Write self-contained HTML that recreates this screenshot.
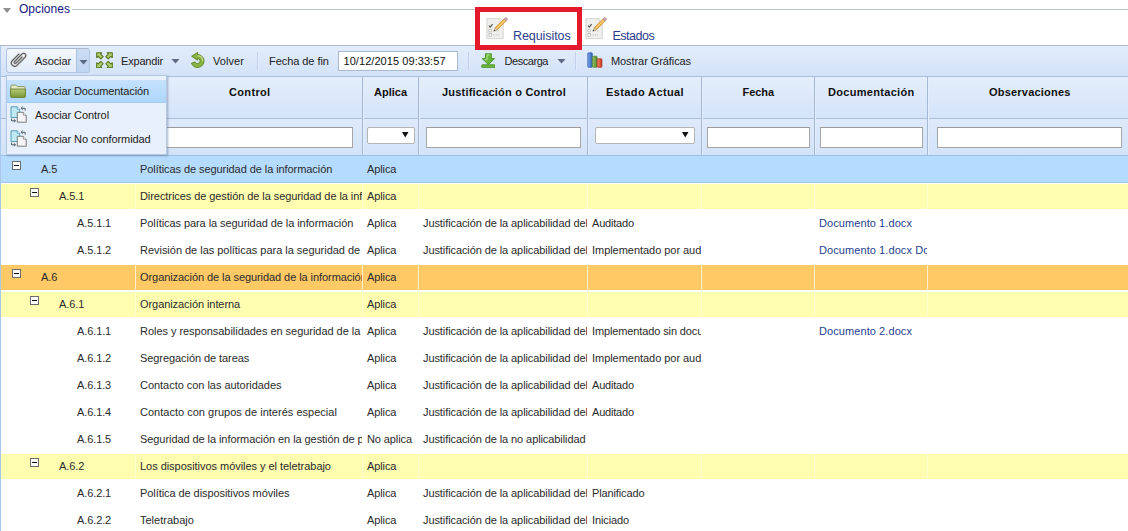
<!DOCTYPE html><html><head><meta charset="utf-8"><title>Requisitos</title><style>
*{box-sizing:border-box;margin:0;padding:0}
html,body{width:1128px;height:531px;overflow:hidden;background:#fff}
body{font-family:"Liberation Sans",sans-serif;font-size:11px;color:#222;position:relative}
.a{position:absolute;white-space:pre}
.t{position:absolute;white-space:pre;line-height:14px;height:14px}
.tb{color:#222;font-size:11px}
.hd{font-weight:bold;font-size:11px;color:#111}
.row{position:absolute;left:0;width:1128px;height:27px}
.c{position:absolute;top:1px;height:25px;overflow:hidden;white-space:pre;line-height:14px;padding:5px 0 0 4px;font-size:11px;color:#2b2b2b;letter-spacing:-0.11px}
.blue .c{background:transparent}
.yellow .c{background:#fffeb0}
.orange .c{background:#ffc966}
.c.lnk{color:#1f3f8f;letter-spacing:0.08px}
.inp{position:absolute;background:#fff;border:1px solid #a6a6a6;border-top-color:#9a9a9a}
.sel{position:absolute;background:#fff;border:1px solid #b4b4b4;border-radius:2px}
.sep{position:absolute;top:52px;width:2px;height:18px;border-left:1px solid #c3d2ea;border-right:1px solid #e2ebf9}
.ex{position:absolute;width:9px;height:9px;border:1px solid #6b6b6b;background:#fff}
.ex:after{content:"";position:absolute;left:1px;top:3px;width:5px;height:1px;background:#111}
</style></head><body>
<svg class="a" style="left:3px;top:7px" width="8" height="6" viewBox="0 0 8 6"><path d="M0 1h8L4 6z" fill="#8f8f8f"/></svg>
<div class="t" style="left:19px;top:2px;font-size:12px;color:#15157f;letter-spacing:0.04px">Opciones</div>
<div class="a" style="left:72px;top:9px;width:1056px;height:1px;background:#bfc2cf"></div>
<svg class="a" style="left:486px;top:17px" width="23" height="23" viewBox="0 0 23 23">
<path d="M.9 1.600h13.400l2.900 2.900v17.200H.9z" fill="#efefed" stroke="#d0d3cd" stroke-width=".9"/>
<path d="M14.300 1.600v2.900h2.900" fill="#fafafa" stroke="#d0d3cd" stroke-width=".7"/>
<path d="M3 8.600l1.300 1.500 2.300-3" fill="none" stroke="#5a5a5a" stroke-width="1.200"/>
<rect x="3" y="12.300" width="2.600" height="2.600" fill="#fff" stroke="#a9aca6" stroke-width=".6"/>
<rect x="3" y="16.600" width="2.600" height="2.600" fill="#fff" stroke="#a9aca6" stroke-width=".6"/>
<path d="M7.500 13.800h6M7.500 18h6" stroke="#c2c5bf" stroke-width="1" stroke-dasharray="1.200 1"/>
<path d="M9.040 10.840L17.940 1.940 20.060 4.060 11.160 12.960z" fill="#f2b54e" stroke="#c08a30" stroke-width=".7"/>
<path d="M10.100 11.900L19 3" stroke="#f9d590" stroke-width=".9"/>
<path d="M17.940 1.940L19.740.14 21.860 2.260 20.060 4.060z" fill="#d3a3ad" stroke="#a4888e" stroke-width=".6"/>
<path d="M7.800 14.200L9.040 10.840 11.160 12.960z" fill="#e9d3ae" stroke="#9a8a6a" stroke-width=".5"/>
<path d="M7.800 14.200L8.400 12.600 9.400 13.600z" fill="#333"/>
</svg>
<div class="t" style="left:513px;top:29px;font-size:12.5px;color:#2a3d8c;letter-spacing:-0.08px">Requisitos</div>
<svg class="a" style="left:585px;top:17px" width="23" height="23" viewBox="0 0 23 23">
<path d="M.9 1.600h13.400l2.900 2.900v17.200H.9z" fill="#efefed" stroke="#d0d3cd" stroke-width=".9"/>
<path d="M14.300 1.600v2.900h2.900" fill="#fafafa" stroke="#d0d3cd" stroke-width=".7"/>
<path d="M3 8.600l1.300 1.500 2.300-3" fill="none" stroke="#5a5a5a" stroke-width="1.200"/>
<rect x="3" y="12.300" width="2.600" height="2.600" fill="#fff" stroke="#a9aca6" stroke-width=".6"/>
<rect x="3" y="16.600" width="2.600" height="2.600" fill="#fff" stroke="#a9aca6" stroke-width=".6"/>
<path d="M7.500 13.800h6M7.500 18h6" stroke="#c2c5bf" stroke-width="1" stroke-dasharray="1.200 1"/>
<path d="M9.040 10.840L17.940 1.940 20.060 4.060 11.160 12.960z" fill="#f2b54e" stroke="#c08a30" stroke-width=".7"/>
<path d="M10.100 11.900L19 3" stroke="#f9d590" stroke-width=".9"/>
<path d="M17.940 1.940L19.740.14 21.860 2.260 20.060 4.060z" fill="#d3a3ad" stroke="#a4888e" stroke-width=".6"/>
<path d="M7.800 14.200L9.040 10.840 11.160 12.960z" fill="#e9d3ae" stroke="#9a8a6a" stroke-width=".5"/>
<path d="M7.800 14.200L8.400 12.600 9.400 13.600z" fill="#333"/>
</svg>
<div class="t" style="left:612.5px;top:29px;font-size:12.5px;color:#2a3d8c;letter-spacing:-0.5px">Estados</div>
<div class="a" style="left:0;top:45px;width:1128px;height:32px;background:linear-gradient(#e2edfb,#d3e2f7);border-top:1px solid #adbacd;border-bottom:1px solid #a9bfd9"></div>
<div class="a" style="left:6px;top:48px;width:84px;height:25px;border:1px solid #b3c5de;border-top-color:#a9b9d0;border-radius:3px;background:linear-gradient(#f3f7fd,#e1ebf9)"></div>
<div class="a" style="left:76px;top:49px;width:13px;height:23px;background:linear-gradient(#cbdcf4,#c0d5f1);border-left:1px solid #aec3e0;border-radius:0 2px 2px 0"></div>
<svg class="a" style="left:79px;top:59.500px" width="9" height="5" viewBox="0 0 9 5"><path d="M0.5 0h8L4.5 4.6z" fill="#5c6a84"/></svg>
<svg class="a" style="left:10.300px;top:51.300px" width="17.600" height="17.600" viewBox="0 0 16 16"><path d="M11 5.5L5.500 11a1 1 0 0 1-1.410-1.410L11 2.680a2 2 0 0 1 2.830 2.830L6.330 13.010a3 3 0 0 1-4.240-4.240L8.090 2.770" fill="none" stroke="#d6d6d6" stroke-width="2.100" stroke-linecap="round"/><path d="M11 5.500L5.500 11a1 1 0 0 1-1.410-1.410L11 2.680a2 2 0 0 1 2.830 2.830L6.330 13.010a3 3 0 0 1-4.240-4.240L8.090 2.770" fill="none" stroke="#5a5a5a" stroke-width="1" stroke-linecap="round"/></svg>
<div class="t tb" style="left:35px;top:54px;letter-spacing:-0.1px">Asociar</div>
<svg class="a" style="left:96.300px;top:51.700px" width="17" height="16.400" viewBox="0 0 17 17" preserveAspectRatio="none">
<g fill="#b1cf68" stroke="#50721a" stroke-width="1.050" stroke-linejoin="round">
<path d="M.7.700h5.100L4.600 2.200 7.200 4.800 4.800 7.200 2.200 4.600.7 5.800z"/>
<path d="M16.300.7v5.100L14.800 4.600 12.200 7.200 9.800 4.800 12.400 2.200 11.200.7z"/>
<path d="M.7 16.300v-5.100l1.500 1.200L4.800 9.800l2.400 2.400L4.600 14.800l1.200 1.500z"/>
<path d="M16.300 16.300h-5.100l1.200-1.500L9.800 12.200l2.400-2.400 2.600 2.600 1.500-1.200z"/>
</g></svg>
<div class="t tb" style="left:121px;top:54px;letter-spacing:-0.18px">Expandir</div>
<svg class="a" style="left:171px;top:59px" width="9" height="5" viewBox="0 0 9 5"><path d="M0.5 0h8L4.5 4.6z" fill="#5c6a84"/></svg>
<svg class="a" style="left:188.500px;top:51.500px" width="17" height="17" viewBox="0 0 17 17">
<path d="M8.500 2.500A6.500 6.500 0 1 1 2.390 11.220L6.060 9.890A2.600 2.600 0 1 0 8.500 6.400L8.500 8.200 2.600 4.300 8.500.5z" fill="#8ab441" stroke="#5b8222" stroke-width=".9" stroke-linejoin="round"/>
<path d="M9 3.700a5.200 5.200 0 0 1 4.700 5" fill="none" stroke="#c6dd92" stroke-width="1.100" stroke-linecap="round"/>
</svg>
<div class="t tb" style="left:213px;top:54px;letter-spacing:0.07px">Volver</div>
<div class="sep" style="left:257px"></div>
<div class="t tb" style="left:269px;top:54px;letter-spacing:-0.06px">Fecha de fin</div>
<div class="inp" style="left:338px;top:51px;width:120px;height:20px;border-color:#a7b9d3"></div>
<div class="t tb" style="left:343.5px;top:54px;letter-spacing:0.06px;color:#111">10/12/2015 09:33:57</div>
<div class="sep" style="left:468px"></div>
<svg class="a" style="left:480.700px;top:52.600px" width="14.800" height="15.400" viewBox="0 0 16 16" preserveAspectRatio="none">
<path d="M4.800.8h6.400v5h3.600L8 12 1.200 5.800h3.600z" fill="#68b63a" stroke="#3f8c1f" stroke-width=".9" stroke-linejoin="round"/>
<path d="M6.500 2h3M6.500 2v5H4.200" fill="none" stroke="#b9e695" stroke-width="1"/>
<rect x=".7" y="12.200" width="14.600" height="3" rx=".9" fill="#68b63a" stroke="#3f8c1f" stroke-width=".8"/>
</svg>
<div class="t tb" style="left:504.5px;top:54px;letter-spacing:-0.45px">Descarga</div>
<svg class="a" style="left:557px;top:59px" width="9" height="5" viewBox="0 0 9 5"><path d="M0.5 0h8L4.5 4.6z" fill="#5c6a84"/></svg>
<div class="sep" style="left:575px"></div>
<svg class="a" style="left:586.600px;top:51.600px" width="16.300" height="16.300" viewBox="0 0 17 17">
<defs><linearGradient id="gb" x1="0" x2="1"><stop offset="0" stop-color="#7aa7e8"/><stop offset="1" stop-color="#2f62b8"/></linearGradient>
<linearGradient id="gg" x1="0" x2="1"><stop offset="0" stop-color="#9cc46a"/><stop offset="1" stop-color="#54882a"/></linearGradient>
<linearGradient id="gr" x1="0" x2="1"><stop offset="0" stop-color="#f08a6c"/><stop offset="1" stop-color="#c8321c"/></linearGradient></defs>
<rect x=".8" y=".8" width="4.800" height="15.200" rx="1" fill="url(#gb)" stroke="#2c559c" stroke-width=".7"/>
<rect x="5.600" y="4.400" width="5" height="11.600" rx="1" fill="url(#gg)" stroke="#447c22" stroke-width=".7"/>
<rect x="10.600" y="7" width="5" height="9" rx="1" fill="url(#gr)" stroke="#a43220" stroke-width=".7"/>
</svg>
<div class="t tb" style="left:611px;top:54px;letter-spacing:-0.08px">Mostrar Gráficas</div>
<div class="a" style="left:475px;top:7px;width:107px;height:43px;border:5px solid #e3192c"></div>
<div class="a" style="left:0;top:77px;width:1128px;height:41px;background:linear-gradient(#e4eefc,#d4e4f9)"></div>
<div class="a" style="left:0;top:118px;width:1128px;height:37px;background:linear-gradient(#deeafb,#d3e3f9);border-top:1px solid #aebfd8"></div>
<div class="a" style="left:0;top:155px;width:1128px;height:1px;background:#9fc0e4"></div>
<div class="a" style="left:135px;top:77px;width:2px;height:78px;border-left:1px solid #a6b9d4;border-right:1px solid #e4edfb"></div>
<div class="a" style="left:362px;top:77px;width:2px;height:78px;border-left:1px solid #a6b9d4;border-right:1px solid #e4edfb"></div>
<div class="a" style="left:418px;top:77px;width:2px;height:78px;border-left:1px solid #a6b9d4;border-right:1px solid #e4edfb"></div>
<div class="a" style="left:587px;top:77px;width:2px;height:78px;border-left:1px solid #a6b9d4;border-right:1px solid #e4edfb"></div>
<div class="a" style="left:701px;top:77px;width:2px;height:78px;border-left:1px solid #a6b9d4;border-right:1px solid #e4edfb"></div>
<div class="a" style="left:814px;top:77px;width:2px;height:78px;border-left:1px solid #a6b9d4;border-right:1px solid #e4edfb"></div>
<div class="a" style="left:927px;top:77px;width:2px;height:78px;border-left:1px solid #a6b9d4;border-right:1px solid #e4edfb"></div>
<div class="t hd" style="left:229px;top:85px;letter-spacing:0.34px">Control</div>
<div class="t hd" style="left:374px;top:85px;letter-spacing:0px">Aplica</div>
<div class="t hd" style="left:442px;top:85px;letter-spacing:0.21px">Justificación o Control</div>
<div class="t hd" style="left:606px;top:85px;letter-spacing:0.39px">Estado Actual</div>
<div class="t hd" style="left:742.5px;top:85px;letter-spacing:-0.06px">Fecha</div>
<div class="t hd" style="left:828px;top:85px;letter-spacing:0.31px">Documentación</div>
<div class="t hd" style="left:989px;top:85px;letter-spacing:0.21px">Observaciones</div>
<div class="inp" style="left:140px;top:127px;width:213px;height:21px"></div>
<div class="inp" style="left:426px;top:127px;width:155px;height:21px"></div>
<div class="inp" style="left:707px;top:127px;width:103px;height:21px"></div>
<div class="inp" style="left:820px;top:127px;width:103px;height:21px"></div>
<div class="inp" style="left:937px;top:127px;width:185px;height:21px"></div>
<div class="sel" style="left:367px;top:127px;width:48px;height:17px"></div>
<svg class="a" style="left:402px;top:132.300px" width="6.500" height="5.500" viewBox="0 0 6 5"><path d="M0 0h6L3 5z" fill="#111"/></svg>
<div class="sel" style="left:595px;top:127px;width:100px;height:17px"></div>
<svg class="a" style="left:682px;top:132.300px" width="6.500" height="5.500" viewBox="0 0 6 5"><path d="M0 0h6L3 5z" fill="#111"/></svg>
<div class="row blue" style="top:156px;background:#b5dcff;border-bottom:1px solid #a3c8ec">
<div class="c" style="left:0px;width:135px;padding:0"><span class="ex" style="left:12px;top:4px"></span><span class="a" style="left:41px;top:5px">A.5</span></div>
<div class="c" style="left:136px;width:226px;letter-spacing:-0.07px">Políticas de seguridad de la información</div>
<div class="c" style="left:363px;width:55px;letter-spacing:-0.1px">Aplica</div>
<div class="c" style="left:419px;width:168px;letter-spacing:-0.09px"></div>
<div class="c" style="left:588px;width:113px;letter-spacing:-0.12px"></div>
<div class="c" style="left:702px;width:112px"></div>
<div class="c lnk" style="left:815px;width:112px"></div>
<div class="c" style="left:928px;width:200px"></div>
</div>
<div class="row yellow" style="top:183px;">
<div class="a" style="left:0;top:1px;width:1128px;height:25px;background:#ffffd2"></div>
<div class="c" style="left:0px;width:135px;padding:0"><span class="ex" style="left:30px;top:4px"></span><span class="a" style="left:59px;top:5px">A.5.1</span></div>
<div class="c" style="left:136px;width:226px;letter-spacing:-0.07px">Directrices de gestión de la seguridad de la información</div>
<div class="c" style="left:363px;width:55px;letter-spacing:-0.1px">Aplica</div>
<div class="c" style="left:419px;width:168px;letter-spacing:-0.09px"></div>
<div class="c" style="left:588px;width:113px;letter-spacing:-0.12px"></div>
<div class="c" style="left:702px;width:112px"></div>
<div class="c lnk" style="left:815px;width:112px"></div>
<div class="c" style="left:928px;width:200px"></div>
</div>
<div class="row white" style="top:210px;">
<div class="c" style="left:0px;width:135px;padding:0"><span class="a" style="left:77px;top:5px">A.5.1.1</span></div>
<div class="c" style="left:136px;width:226px;letter-spacing:-0.07px">Políticas para la seguridad de la información</div>
<div class="c" style="left:363px;width:55px;letter-spacing:-0.1px">Aplica</div>
<div class="c" style="left:419px;width:168px;letter-spacing:-0.09px">Justificación de la aplicabilidad del control</div>
<div class="c" style="left:588px;width:113px;letter-spacing:-0.2px">Auditado</div>
<div class="c" style="left:702px;width:112px"></div>
<div class="c lnk" style="left:815px;width:112px">Documento 1.docx</div>
<div class="c" style="left:928px;width:200px"></div>
</div>
<div class="row white" style="top:237px;">
<div class="c" style="left:0px;width:135px;padding:0"><span class="a" style="left:77px;top:5px">A.5.1.2</span></div>
<div class="c" style="left:136px;width:226px;letter-spacing:-0.027px">Revisión de las políticas para la seguridad de la información</div>
<div class="c" style="left:363px;width:55px;letter-spacing:-0.1px">Aplica</div>
<div class="c" style="left:419px;width:168px;letter-spacing:-0.09px">Justificación de la aplicabilidad del control</div>
<div class="c" style="left:588px;width:113px;letter-spacing:-0.04px">Implementado por auditar</div>
<div class="c" style="left:702px;width:112px"></div>
<div class="c lnk" style="left:815px;width:112px">Documento 1.docx Documento 2.docx</div>
<div class="c" style="left:928px;width:200px"></div>
</div>
<div class="row orange" style="top:264px;">
<div class="a" style="left:0;top:1px;width:1128px;height:25px;background:#ffedcb"></div>
<div class="c" style="left:0px;width:135px;padding:0"><span class="ex" style="left:12px;top:4px"></span><span class="a" style="left:41px;top:5px">A.6</span></div>
<div class="c" style="left:136px;width:226px;letter-spacing:-0.07px">Organización de la seguridad de la información</div>
<div class="c" style="left:363px;width:55px;letter-spacing:-0.1px">Aplica</div>
<div class="c" style="left:419px;width:168px;letter-spacing:-0.09px"></div>
<div class="c" style="left:588px;width:113px;letter-spacing:-0.12px"></div>
<div class="c" style="left:702px;width:112px"></div>
<div class="c lnk" style="left:815px;width:112px"></div>
<div class="c" style="left:928px;width:200px"></div>
</div>
<div class="row yellow" style="top:291px;">
<div class="a" style="left:0;top:1px;width:1128px;height:25px;background:#ffffd2"></div>
<div class="c" style="left:0px;width:135px;padding:0"><span class="ex" style="left:30px;top:4px"></span><span class="a" style="left:59px;top:5px">A.6.1</span></div>
<div class="c" style="left:136px;width:226px;letter-spacing:-0.07px">Organización interna</div>
<div class="c" style="left:363px;width:55px;letter-spacing:-0.1px">Aplica</div>
<div class="c" style="left:419px;width:168px;letter-spacing:-0.09px"></div>
<div class="c" style="left:588px;width:113px;letter-spacing:-0.12px"></div>
<div class="c" style="left:702px;width:112px"></div>
<div class="c lnk" style="left:815px;width:112px"></div>
<div class="c" style="left:928px;width:200px"></div>
</div>
<div class="row white" style="top:318px;">
<div class="c" style="left:0px;width:135px;padding:0"><span class="a" style="left:77px;top:5px">A.6.1.1</span></div>
<div class="c" style="left:136px;width:226px;letter-spacing:-0.04px">Roles y responsabilidades en seguridad de la información</div>
<div class="c" style="left:363px;width:55px;letter-spacing:-0.1px">Aplica</div>
<div class="c" style="left:419px;width:168px;letter-spacing:-0.09px">Justificación de la aplicabilidad del control</div>
<div class="c" style="left:588px;width:113px;letter-spacing:-0.12px">Implementado sin documentar</div>
<div class="c" style="left:702px;width:112px"></div>
<div class="c lnk" style="left:815px;width:112px">Documento 2.docx</div>
<div class="c" style="left:928px;width:200px"></div>
</div>
<div class="row white" style="top:345px;">
<div class="c" style="left:0px;width:135px;padding:0"><span class="a" style="left:77px;top:5px">A.6.1.2</span></div>
<div class="c" style="left:136px;width:226px;letter-spacing:-0.07px">Segregación de tareas</div>
<div class="c" style="left:363px;width:55px;letter-spacing:-0.1px">Aplica</div>
<div class="c" style="left:419px;width:168px;letter-spacing:-0.09px">Justificación de la aplicabilidad del control</div>
<div class="c" style="left:588px;width:113px;letter-spacing:-0.04px">Implementado por auditar</div>
<div class="c" style="left:702px;width:112px"></div>
<div class="c lnk" style="left:815px;width:112px"></div>
<div class="c" style="left:928px;width:200px"></div>
</div>
<div class="row white" style="top:372px;">
<div class="c" style="left:0px;width:135px;padding:0"><span class="a" style="left:77px;top:5px">A.6.1.3</span></div>
<div class="c" style="left:136px;width:226px;letter-spacing:-0.035px">Contacto con las autoridades</div>
<div class="c" style="left:363px;width:55px;letter-spacing:-0.1px">Aplica</div>
<div class="c" style="left:419px;width:168px;letter-spacing:-0.09px">Justificación de la aplicabilidad del control</div>
<div class="c" style="left:588px;width:113px;letter-spacing:-0.2px">Auditado</div>
<div class="c" style="left:702px;width:112px"></div>
<div class="c lnk" style="left:815px;width:112px"></div>
<div class="c" style="left:928px;width:200px"></div>
</div>
<div class="row white" style="top:399px;">
<div class="c" style="left:0px;width:135px;padding:0"><span class="a" style="left:77px;top:5px">A.6.1.4</span></div>
<div class="c" style="left:136px;width:226px;letter-spacing:0.015px">Contacto con grupos de interés especial</div>
<div class="c" style="left:363px;width:55px;letter-spacing:-0.1px">Aplica</div>
<div class="c" style="left:419px;width:168px;letter-spacing:-0.09px">Justificación de la aplicabilidad del control</div>
<div class="c" style="left:588px;width:113px;letter-spacing:-0.2px">Auditado</div>
<div class="c" style="left:702px;width:112px"></div>
<div class="c lnk" style="left:815px;width:112px"></div>
<div class="c" style="left:928px;width:200px"></div>
</div>
<div class="row white" style="top:426px;">
<div class="c" style="left:0px;width:135px;padding:0"><span class="a" style="left:77px;top:5px">A.6.1.5</span></div>
<div class="c" style="left:136px;width:226px;letter-spacing:-0.07px">Seguridad de la información en la gestión de proyectos</div>
<div class="c" style="left:363px;width:55px;letter-spacing:-0.1px">No aplica</div>
<div class="c" style="left:419px;width:168px;letter-spacing:-0.09px">Justificación de la no aplicabilidad</div>
<div class="c" style="left:588px;width:113px;letter-spacing:-0.12px"></div>
<div class="c" style="left:702px;width:112px"></div>
<div class="c lnk" style="left:815px;width:112px"></div>
<div class="c" style="left:928px;width:200px"></div>
</div>
<div class="row yellow" style="top:453px;">
<div class="a" style="left:0;top:1px;width:1128px;height:25px;background:#ffffd2"></div>
<div class="c" style="left:0px;width:135px;padding:0"><span class="ex" style="left:30px;top:4px"></span><span class="a" style="left:59px;top:5px">A.6.2</span></div>
<div class="c" style="left:136px;width:226px;letter-spacing:-0.04px">Los dispositivos móviles y el teletrabajo</div>
<div class="c" style="left:363px;width:55px;letter-spacing:-0.1px">Aplica</div>
<div class="c" style="left:419px;width:168px;letter-spacing:-0.09px"></div>
<div class="c" style="left:588px;width:113px;letter-spacing:-0.12px"></div>
<div class="c" style="left:702px;width:112px"></div>
<div class="c lnk" style="left:815px;width:112px"></div>
<div class="c" style="left:928px;width:200px"></div>
</div>
<div class="row white" style="top:480px;">
<div class="c" style="left:0px;width:135px;padding:0"><span class="a" style="left:77px;top:5px">A.6.2.1</span></div>
<div class="c" style="left:136px;width:226px;letter-spacing:-0.07px">Política de dispositivos móviles</div>
<div class="c" style="left:363px;width:55px;letter-spacing:-0.1px">Aplica</div>
<div class="c" style="left:419px;width:168px;letter-spacing:-0.09px">Justificación de la aplicabilidad del control</div>
<div class="c" style="left:588px;width:113px;letter-spacing:-0.12px">Planificado</div>
<div class="c" style="left:702px;width:112px"></div>
<div class="c lnk" style="left:815px;width:112px"></div>
<div class="c" style="left:928px;width:200px"></div>
</div>
<div class="row white" style="top:507px;">
<div class="c" style="left:0px;width:135px;padding:0"><span class="a" style="left:77px;top:5px">A.6.2.2</span></div>
<div class="c" style="left:136px;width:226px;letter-spacing:0px">Teletrabajo</div>
<div class="c" style="left:363px;width:55px;letter-spacing:-0.1px">Aplica</div>
<div class="c" style="left:419px;width:168px;letter-spacing:-0.09px">Justificación de la aplicabilidad del control</div>
<div class="c" style="left:588px;width:113px;letter-spacing:-0.12px">Iniciado</div>
<div class="c" style="left:702px;width:112px"></div>
<div class="c lnk" style="left:815px;width:112px"></div>
<div class="c" style="left:928px;width:200px"></div>
</div>
<div class="a" style="left:0;top:46px;width:1px;height:485px;background:#a9c7ea"></div>
<div class="a" style="left:6px;top:75px;width:161px;height:80px;background:#e8f0fb;border:1px solid #b5c8e3;box-shadow:1px 1px 2px rgba(90,110,140,.5)"></div>
<div class="a" style="left:7px;top:80px;width:159px;height:23px;background:linear-gradient(#c4e2fc,#aed7fa);border-bottom:1px solid #a3ccf1"></div>
<svg class="a" style="left:9.600px;top:84px" width="16" height="14.200" viewBox="0 0 16 14"><defs><linearGradient id="gf" x1="0" y1="0" x2="0" y2="1"><stop offset="0" stop-color="#b7cb76"/><stop offset="1" stop-color="#789534"/></linearGradient></defs><path d="M.9 12.500V1.900c0-.5.400-.9.900-.9h3.900c.4 0 .7.200.9.500l.7 1h6.900c.5 0 .9.400.9.900v9.100z" fill="#e3e9c4" stroke="#77854a" stroke-width=".8"/><path d="M.6 4.900h14.800v7.600c0 .5-.4.900-.9.900H1.500c-.5 0-.9-.4-.9-.9z" fill="url(#gf)" stroke="#627c2a" stroke-width=".8"/></svg>
<svg class="a" style="left:9.500px;top:105.5px" width="17" height="17" viewBox="0 0 17 17">
<path d="M1 .8h6.200l2.600 2.600v8.100H1z" fill="#bfe8f4" stroke="#4b93b3" stroke-width=".9"/>
<path d="M7.200.8v2.600h2.600" fill="#e8f7fc" stroke="#4b93b3" stroke-width=".7"/>
<path d="M7.300 6.300h6l2.900 2.900v7H7.300z" fill="#f6f6f6" stroke="#6e6e6e" stroke-width=".9"/>
<path d="M13.300 6.300v2.900h2.900" fill="#fff" stroke="#6e6e6e" stroke-width=".7"/>
<path d="M11.200 2.300h3.900v2.300" fill="none" stroke="#4a5a6a" stroke-width="1"/><path d="M12.700.8l-1.600 1.500 1.600 1.500" stroke="#4a5a6a" stroke-width="1" fill="none"/>
<path d="M1.500 12.500v2.300h3.800" fill="none" stroke="#4a5a6a" stroke-width="1"/><path d="M3.900 13.300l1.600 1.500-1.600 1.500" stroke="#4a5a6a" stroke-width="1" fill="none"/>
</svg>
<svg class="a" style="left:9.500px;top:129.5px" width="17" height="17" viewBox="0 0 17 17">
<path d="M1 .8h6.200l2.600 2.600v8.100H1z" fill="#bfe8f4" stroke="#4b93b3" stroke-width=".9"/>
<path d="M7.200.8v2.600h2.600" fill="#e8f7fc" stroke="#4b93b3" stroke-width=".7"/>
<path d="M7.300 6.300h6l2.900 2.900v7H7.300z" fill="#f6f6f6" stroke="#6e6e6e" stroke-width=".9"/>
<path d="M13.300 6.300v2.900h2.900" fill="#fff" stroke="#6e6e6e" stroke-width=".7"/>
<path d="M11.200 2.300h3.900v2.300" fill="none" stroke="#4a5a6a" stroke-width="1"/><path d="M12.700.8l-1.600 1.500 1.600 1.500" stroke="#4a5a6a" stroke-width="1" fill="none"/>
<path d="M1.500 12.500v2.300h3.800" fill="none" stroke="#4a5a6a" stroke-width="1"/><path d="M3.900 13.300l1.600 1.500-1.600 1.500" stroke="#4a5a6a" stroke-width="1" fill="none"/>
</svg>
<div class="t tb" style="left:35px;top:84px;letter-spacing:-0.1px">Asociar Documentación</div>
<div class="t tb" style="left:35px;top:108px;letter-spacing:-0.08px">Asociar Control</div>
<div class="t tb" style="left:35px;top:132px;letter-spacing:-0.08px">Asociar No conformidad</div>
</body></html>
